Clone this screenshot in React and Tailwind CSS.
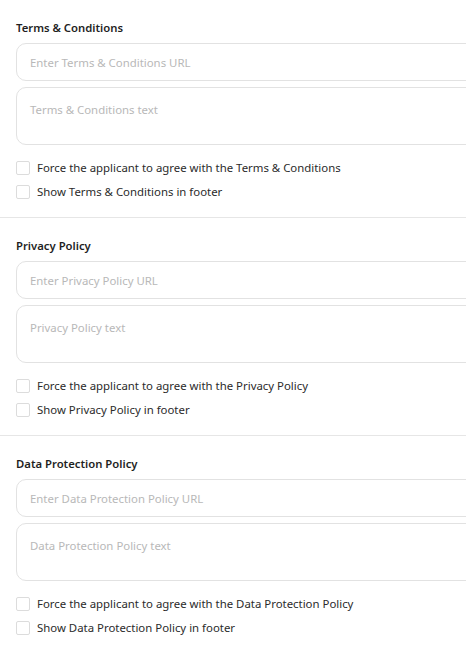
const sections = [
  { title: 'Terms & Conditions', urlPlaceholder: 'Enter Terms & Conditions URL', textPlaceholder: 'Terms & Conditions text' },
  { title: 'Privacy Policy', urlPlaceholder: 'Enter Privacy Policy URL', textPlaceholder: 'Privacy Policy text' },
  { title: 'Data Protection Policy', urlPlaceholder: 'Enter Data Protection Policy URL', textPlaceholder: 'Data Protection Policy text' },
];

function Check({ label }) {
  return (
    <label className="flex items-center gap-[7px] h-6 text-[11.4px] text-[#2b2b2b]">
      <span className="w-[14px] h-[14px] border border-[#dcdcdc] rounded-[2px] bg-white shrink-0" />
      {label}
    </label>
  );
}

function Section({ title, urlPlaceholder, textPlaceholder, last }) {
  return (
    <div className={'pl-4 pt-[18px] pb-[13px]' + (last ? '' : ' border-b border-[#e6e6e6]')}>
      <h2 className="text-[11.3px] font-semibold text-[#1f1f1f] leading-5">{title}</h2>
      <div className="w-[520px] mt-[5px] flex flex-col gap-[6px]">
        <input
          className="h-[38px] px-[13px] border border-[#e2e2e2] rounded-[10px] text-[11.4px] placeholder:text-[#b8b8b8] outline-none"
          placeholder={urlPlaceholder}
        />
        <textarea
          className="h-[58px] px-[13px] pt-[13px] border border-[#e2e2e2] rounded-[10px] text-[11.4px] placeholder:text-[#b8b8b8] outline-none resize-none"
          placeholder={textPlaceholder}
        />
      </div>
      <div className="mt-[11px] flex flex-col">
        <Check label={`Force the applicant to agree with the ${title}`} />
        <Check label={`Show ${title} in footer`} />
      </div>
    </div>
  );
}

export default function App() {
  return (
    <div className="w-[466px] h-[655px] overflow-hidden bg-white" style={{ fontFamily: '"Noto Sans", "Open Sans", sans-serif' }}>
      {sections.map((s, i) => (
        <Section key={s.title} {...s} last={i === sections.length - 1} />
      ))}
    </div>
  );
}
